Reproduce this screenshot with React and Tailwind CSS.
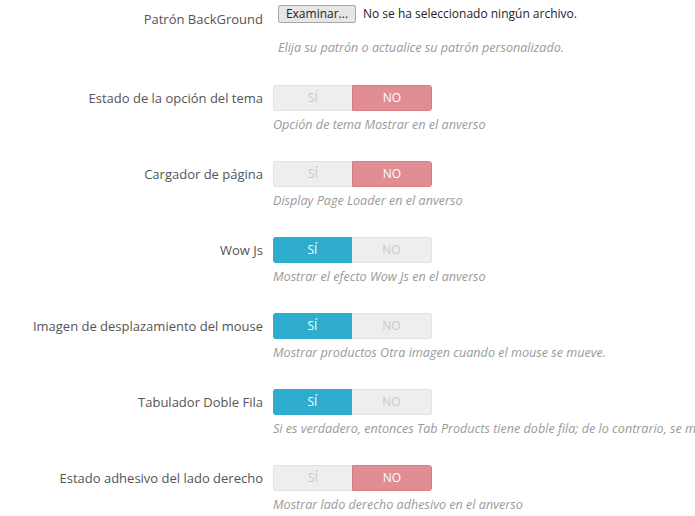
const rows = [
  { label: "Estado de la opción del tema", on: false, help: "Opción de tema Mostrar en el anverso" },
  { label: "Cargador de página", on: false, help: "Display Page Loader en el anverso" },
  { label: "Wow Js", on: true, help: "Mostrar el efecto Wow Js en el anverso" },
  { label: "Imagen de desplazamiento del mouse", on: true, help: "Mostrar productos Otra imagen cuando el mouse se mueve." },
  { label: "Tabulador Doble Fila", on: true, help: "Si es verdadero, entonces Tab Products tiene doble fila; de lo contrario, se mostrará en una sola fila" },
  { label: "Estado adhesivo del lado derecho", on: false, help: "Mostrar lado derecho adhesivo en el anverso" },
];

function Toggle({ on }) {
  return (
    <div className="flex h-[26px] w-[159px] text-[12px]">
      <div
        className={`flex-1 flex items-center justify-center rounded-l-[3px] ${
          on ? "bg-[#2eaccd] text-white" : "bg-[#eeeeee] text-[#c8c8c8] border border-r-0 border-[#e2e2e2]"
        }`}
      >
        SÍ
      </div>
      <div
        className={`flex-1 flex items-center justify-center rounded-r-[3px] ${
          on ? "bg-[#eeeeee] text-[#c8c8c8] border border-l-0 border-[#e2e2e2]" : "bg-[#e08d93] text-white border border-[#d77b83]"
        }`}
      >
        NO
      </div>
    </div>
  );
}

export default function App() {
  return (
    <div className="w-[695px] h-[516px] overflow-hidden bg-white font-['Open_Sans',sans-serif] text-[#555]">
      <div className="flex">
        <div className="w-[263px] shrink-0 text-right text-[13px] pt-[9px] leading-[20px]">Patrón BackGround</div>
        <div className="pl-[15px] pt-[5px] whitespace-nowrap">
          <div className="flex items-center gap-[7px] text-[12px] text-[#222]">
            <div className="h-[18px] w-[78px] flex items-center justify-center border border-[#a8a8a8] bg-[#e6e6e6] rounded-[2px]">
              Examinar...
            </div>
            <span>No se ha seleccionado ningún archivo.</span>
          </div>
          <div className="mt-[16px] italic text-[12.6px] leading-[18px] text-[#9a9a9a]">
            Elija su patrón o actualice su patrón personalizado.
          </div>
        </div>
      </div>
      <div className="mt-[28px] flex flex-col gap-[27px]">
        {rows.map((r) => (
          <div key={r.label} className="flex">
            <div className="w-[263px] shrink-0 text-right text-[13px] leading-[26px] whitespace-nowrap">{r.label}</div>
            <div className="pl-[10px] whitespace-nowrap">
              <Toggle on={r.on} />
              <div className="mt-[5px] italic text-[12.6px] leading-[18px] text-[#9a9a9a]">{r.help}</div>
            </div>
          </div>
        ))}
      </div>
    </div>
  );
}
